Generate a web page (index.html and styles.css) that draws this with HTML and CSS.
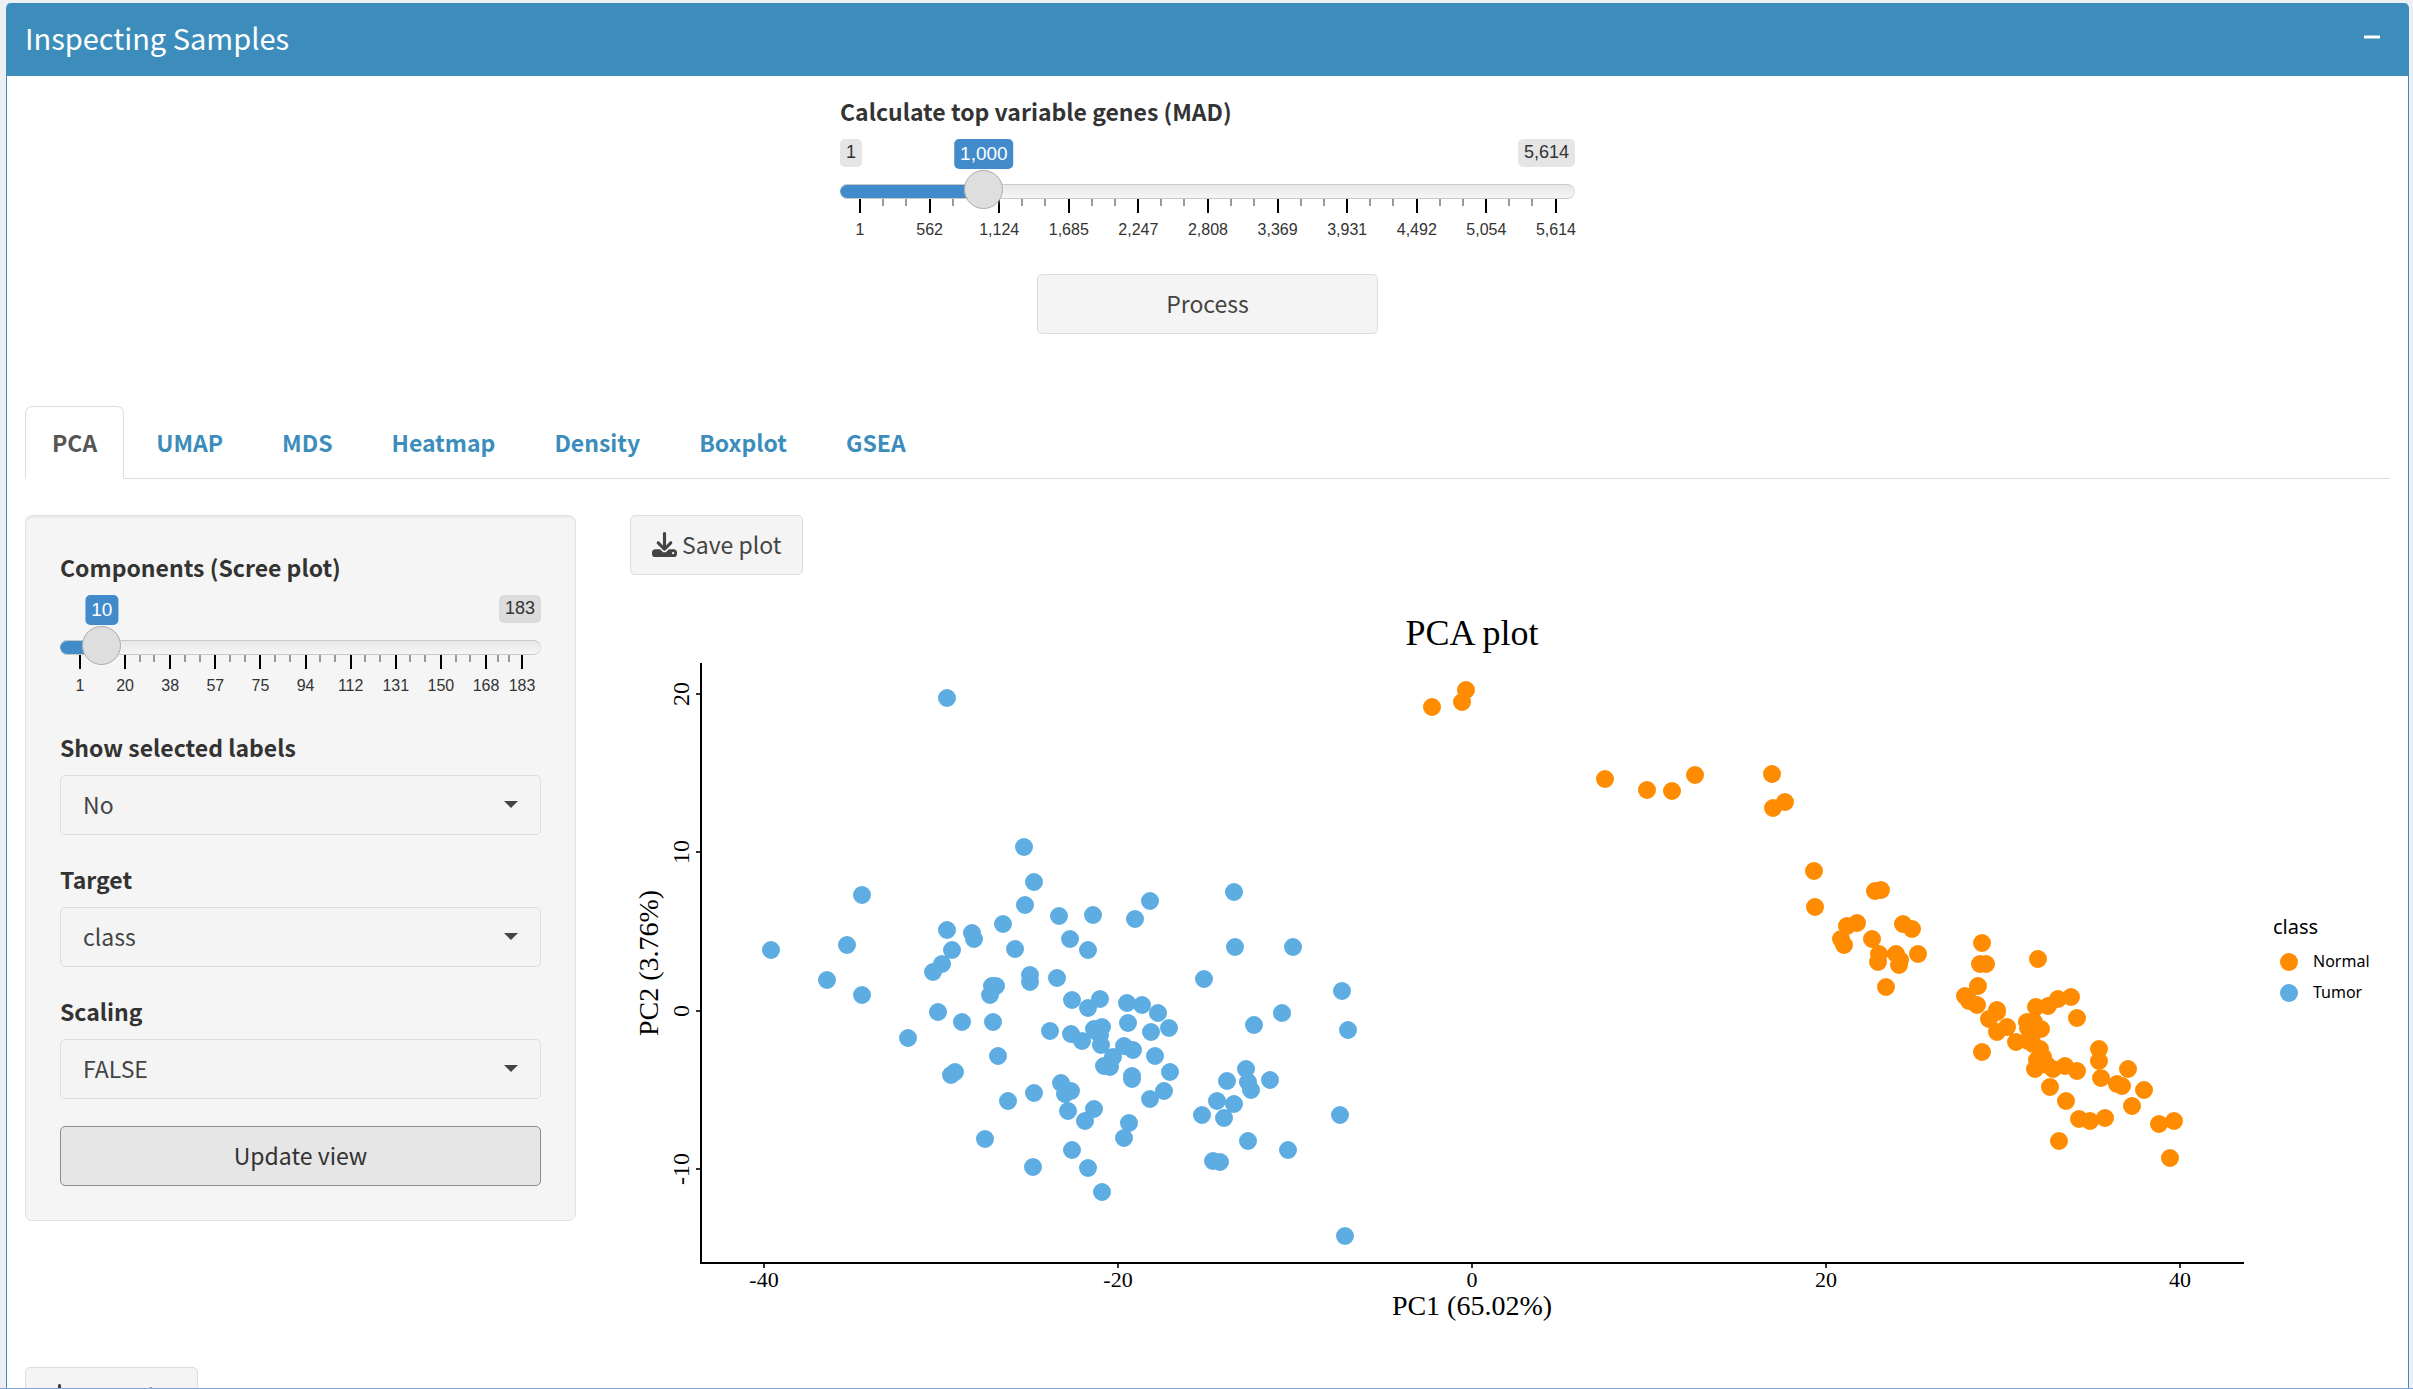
FILE: index.html
```html
<!DOCTYPE html>
<html lang="en">
<head>
<meta charset="utf-8">
<meta name="viewport" content="width=device-width, initial-scale=1">
<title>Inspecting Samples</title>
<link rel="stylesheet" href="styles.css">
</head>
<body>
<svg class="sprite" aria-hidden="true">
  <symbol id="icon-download" viewBox="0 0 512 512">
    <path d="M288 32c0-17.7-14.3-32-32-32s-32 14.3-32 32V274.7l-73.4-73.4c-12.5-12.5-32.8-12.5-45.3 0s-12.5 32.8 0 45.3l128 128c12.5 12.5 32.8 12.5 45.3 0l128-128c12.5-12.5 12.5-32.8 0-45.3s-32.8-12.5-45.3 0L288 274.7V32zM64 352c-35.3 0-64 28.7-64 64v32c0 35.3 28.7 64 64 64H448c35.3 0 64-28.7 64-64V416c0-35.3-28.7-64-64-64H346.5l-45.3 45.3c-25 25-65.5 25-90.5 0L165.5 352H64zm368 56a24 24 0 1 1 0 48 24 24 0 1 1 0-48z"/>
  </symbol>
</svg>
<main class="page">
  <section class="box">
    <header class="box-header">
      <h1 class="box-title">Inspecting Samples</h1>
      <button class="collapse" type="button" aria-label="Collapse"><svg viewBox="0 0 18 18"><path d="M1 9h16"/></svg></button>
    </header>
    <div class="box-body">
      <div class="top-controls">
        <div class="field">
          <label class="field-label" for="mad">Calculate top variable genes (MAD)</label>
          <div class="slider" style="--pos: .178">
            <div class="slider-head">
              <span class="limit">1</span>
              <output class="current" for="mad">1,000</output>
              <span class="limit limit-max">5,614</span>
            </div>
            <input id="mad" type="range" min="1" max="5614" value="1000">
            <ul class="ticks">
              <li><span>1</span></li><li><span>562</span></li><li><span>1,124</span></li><li><span>1,685</span></li><li><span>2,247</span></li><li><span>2,808</span></li><li><span>3,369</span></li><li><span>3,931</span></li><li><span>4,492</span></li><li><span>5,054</span></li><li><span>5,614</span></li>
            </ul>
          </div>
        </div>
        <button class="btn process" type="button">Process</button>
      </div>

      <nav class="tabs">
        <a class="tab active" href="#pca" aria-current="page">PCA</a>
        <a class="tab" href="#umap">UMAP</a>
        <a class="tab" href="#mds">MDS</a>
        <a class="tab" href="#heatmap">Heatmap</a>
        <a class="tab" href="#density">Density</a>
        <a class="tab" href="#boxplot">Boxplot</a>
        <a class="tab" href="#gsea">GSEA</a>
      </nav>

      <div class="panel" id="pca">
        <form class="well">
          <div class="field">
            <label class="field-label" for="components">Components (Scree plot)</label>
            <div class="slider" style="--pos: .0495">
              <div class="slider-head">
                <output class="current" for="components">10</output>
                <span class="limit limit-max">183</span>
              </div>
              <input id="components" type="range" min="1" max="183" value="10">
              <ul class="ticks ticks-short-end">
                <li><span>1</span></li><li><span>20</span></li><li><span>38</span></li><li><span>57</span></li><li><span>75</span></li><li><span>94</span></li><li><span>112</span></li><li><span>131</span></li><li><span>150</span></li><li><span>168</span></li><li><span>183</span></li>
              </ul>
            </div>
          </div>
          <div class="selects">
            <div class="field">
              <label class="field-label" for="labels">Show selected labels</label>
              <div class="select"><select id="labels"><option>No</option><option>Yes</option></select></div>
            </div>
            <div class="field">
              <label class="field-label" for="target">Target</label>
              <div class="select"><select id="target"><option>class</option></select></div>
            </div>
            <div class="field">
              <label class="field-label" for="scaling">Scaling</label>
              <div class="select"><select id="scaling"><option>FALSE</option><option>TRUE</option></select></div>
            </div>
            <button class="btn update" type="button">Update view</button>
          </div>
        </form>

        <div class="plot-column">
          <button class="btn save" type="button"><svg class="icon"><use href="#icon-download"/></svg>Save plot</button>
          <svg class="plot" viewBox="630 590 1760 740" role="img" aria-label="PCA plot of normal and tumor samples">
            <text class="plot-title" x="1472" y="645">PCA plot</text>
            <path class="axis" d="M701 663V1263H2244"/>
            <path class="axis-tick" d="M696 694h4M696 852h4M696 1011h4M696 1169h4M764 1264v4M1118 1264v4M1472 1264v4M1826 1264v4M2180 1264v4"/>
            <g class="x-labels">
              <text x="764" y="1287">-40</text><text x="1118" y="1287">-20</text><text x="1472" y="1287">0</text><text x="1826" y="1287">20</text><text x="2180" y="1287">40</text>
            </g>
            <g class="y-labels">
              <text transform="translate(689 694) rotate(-90)">20</text><text transform="translate(689 852) rotate(-90)">10</text><text transform="translate(689 1011) rotate(-90)">0</text><text transform="translate(689 1169) rotate(-90)">-10</text>
            </g>
            <text class="axis-title" x="1472" y="1315">PC1 (65.02%)</text>
            <text class="axis-title" transform="translate(658 963) rotate(-90)">PC2 (3.76%)</text>
            <path class="points tumor" d="M947 698h0M1024 847h0M1034 882h0M862 895h0M1025 905h0M1059 916h0M1093 915h0M1150 901h0M1135 919h0M1003 924h0M947 930h0M972 933h0M771 950h0M847 945h0M827 980h0M862 995h0M974 939h0M952 950h0M942 964h0M933 972h0M1015 949h0M1030 975h0M1030 982h0M1057 978h0M992 986h0M996 986h0M990 995h0M938 1012h0M962 1022h0M993 1022h0M908 1038h0M998 1056h0M951 1075h0M955 1072h0M1008 1101h0M1034 1093h0M985 1139h0M1033 1167h0M1070 939h0M1088 950h0M1072 1000h0M1088 1008h0M1100 999h0M1127 1003h0M1142 1005h0M1158 1013h0M1169 1028h0M1128 1023h0M1151 1032h0M1050 1031h0M1071 1034h0M1082 1041h0M1094 1029h0M1102 1027h0M1097 1032h0M1100 1035h0M1101 1045h0M1124 1046h0M1133 1050h0M1113 1057h0M1104 1066h0M1110 1067h0M1155 1056h0M1132 1076h0M1132 1079h0M1170 1072h0M1164 1091h0M1150 1099h0M1061 1083h0M1071 1091h0M1065 1094h0M1068 1111h0M1094 1109h0M1085 1121h0M1129 1123h0M1124 1138h0M1072 1150h0M1088 1168h0M1102 1192h0M1234 892h0M1235 947h0M1293 947h0M1204 979h0M1342 991h0M1282 1013h0M1254 1025h0M1348 1030h0M1246 1069h0M1227 1081h0M1248 1082h0M1251 1090h0M1270 1080h0M1217 1101h0M1234 1104h0M1202 1115h0M1224 1118h0M1340 1115h0M1248 1141h0M1288 1150h0M1213 1161h0M1220 1162h0M1345 1236h0"/>
            <path class="points normal" d="M1432 707h0M1466 690h0M1462 702h0M1605 779h0M1647 790h0M1672 791h0M1695 775h0M1772 774h0M1785 802h0M1773 808h0M1814 871h0M1815 907h0M1875 891h0M1881 890h0M1847 926h0M1857 923h0M1841 939h0M1844 945h0M1872 939h0M1903 924h0M1912 929h0M1879 954h0M1878 962h0M1896 954h0M1900 960h0M1899 965h0M1918 954h0M1886 987h0M1982 943h0M1980 964h0M1986 964h0M2038 959h0M1978 986h0M1965 996h0M1969 1001h0M1977 1005h0M1997 1010h0M1997 1012h0M1989 1019h0M2007 1027h0M1997 1032h0M1982 1052h0M2016 1042h0M2036 1007h0M2048 1006h0M2058 999h0M2071 997h0M2077 1018h0M2027 1022h0M2034 1022h0M2028 1028h0M2041 1029h0M2030 1037h0M2028 1041h0M2033 1044h0M2040 1049h0M2043 1057h0M2037 1060h0M2035 1069h0M2047 1065h0M2053 1069h0M2065 1066h0M2077 1071h0M2050 1087h0M2066 1101h0M2099 1049h0M2099 1061h0M2101 1078h0M2128 1069h0M2117 1084h0M2122 1086h0M2144 1090h0M2132 1106h0M2079 1119h0M2090 1121h0M2105 1118h0M2059 1141h0M2159 1124h0M2174 1121h0M2170 1158h0"/>
            <g class="legend">
              <text class="legend-title" x="2273" y="934">class</text>
              <path class="points normal" d="M2289 962h0"/>
              <text x="2313" y="967">Normal</text>
              <path class="points tumor" d="M2289 993h0"/>
              <text x="2313" y="998">Tumor</text>
            </g>
          </svg>
        </div>
      </div>

      <button class="btn save" type="button"><svg class="icon"><use href="#icon-download"/></svg>Save plot</button>
    </div>
  </section>
</main>
</body>
</html>
```
FILE: styles.css
```css
*, *::before, *::after { box-sizing: border-box; }

body {
  margin: 0;
  background: #ecf0f5;
  color: #333;
  font: 23px/35px "Noto Sans CJK SC", "Open Sans", sans-serif;
}

.sprite { display: none; }

.page {
  height: 100vh;
  overflow: hidden;
  padding: 3px 4px 0 6px;
  border-bottom: 1px solid #7ea6d8;
}

.box {
  background: #fff;
  border: solid #3c8dbc;
  border-width: 0 1px 1px;
  border-radius: 5px;
}

.box-header {
  display: flex;
  align-items: center;
  justify-content: space-between;
  height: 73px;
  padding: 0 27px 6px 18px;
  background: #3c8dbc;
  border-radius: 4px 4px 0 0;
  color: #fff;
}

.box-title {
  margin: 0;
  font-size: 29px;
  font-weight: 400;
  line-height: 40px;
}

.collapse {
  display: flex;
  padding: 0;
  border: 0;
  background: none;
}

.collapse svg {
  width: 18px;
  height: 18px;
  stroke: #fff;
  stroke-width: 3;
}

.box-body { padding: 18px; }

.top-controls {
  width: 735px;
  max-width: 100%;
  margin: 0 auto 72px;
}

.field-label {
  display: block;
  margin-bottom: 10px;
  font-weight: 700;
}

/* Range sliders */
.slider {
  position: relative;
  font-family: "Liberation Sans", Arial, sans-serif;
  padding-bottom: 34px;
}

.slider-head {
  display: flex;
  align-items: flex-start;
  height: 45px;
}

.limit {
  padding: 0 6px 1px;
  border-radius: 5px;
  background: rgba(0, 0, 0, .1);
  font-size: 18px;
  line-height: 27px;
}

.limit-max { margin-left: auto; }

.current {
  position: absolute;
  top: 0;
  left: calc(20px + (100% - 39px) * var(--pos));
  transform: translateX(-50%);
  padding: 0 6px;
  border-radius: 5px;
  background: #428bca;
  color: #fff;
  font-size: 19px;
  line-height: 30px;
}

.slider input {
  appearance: none;
  display: block;
  position: relative;
  width: 100%;
  height: 15px;
  margin: 0;
  background: none;
}

.slider input::-webkit-slider-runnable-track {
  height: 15px;
  border-radius: 8px;
  background:
    linear-gradient(#428bca, #428bca) 0 0 / calc(20px + (100% - 39px) * var(--pos)) 100% no-repeat border-box,
    linear-gradient(#ddd -50%, #fff 150%);
  box-shadow: inset 0 0 0 1px rgba(0, 0, 0, .02), inset 0 1px #ccc, inset 0 -1px #ccc;
}

.slider input::-webkit-slider-thumb {
  appearance: none;
  width: 39px;
  height: 39px;
  margin-top: -14px;
  border: 1px solid #ababab;
  border-radius: 50%;
  background: #dedede;
  box-shadow: 1px 1px 3px rgba(255, 255, 255, .3);
}

.ticks {
  display: flex;
  height: 41px;
  margin: 0 18px 0 19px;
  padding: 0;
  list-style: none;
  font-size: 16px;
  line-height: 20px;
}

.ticks li {
  flex: 45 1 0;
  min-width: 0;
  padding-top: 21px;
  background:
    linear-gradient(#000, #000) 0 0 / 2px 14px no-repeat,
    linear-gradient(#999, #999) 34% 0 / 2px 7px no-repeat,
    linear-gradient(#999, #999) 68% 0 / 2px 7px no-repeat;
}

.ticks li:last-child {
  flex: 0 0 2px;
  background: linear-gradient(#000, #000) 0 0 / 2px 14px no-repeat;
}

.ticks-short-end li:nth-last-child(2) { flex-grow: 36; }

.ticks span {
  display: flex;
  justify-content: center;
  width: 2px;
  white-space: nowrap;
}

/* Buttons */
.btn {
  height: 60px;
  padding: 0 21px 2px;
  border: 1px solid #ddd;
  border-radius: 5px;
  background: #f4f4f4;
  color: #444;
  font: inherit;
}

.process {
  display: block;
  width: 341px;
  margin: 0 auto;
}

.update {
  border-color: #8c8c8c;
  background: #e6e6e6;
  color: #333;
}

.save {
  display: inline-flex;
  align-items: center;
  gap: 5px;
}

.icon {
  width: 25px;
  height: 25px;
  fill: currentColor;
}

/* Tabs */
.tabs {
  display: flex;
  gap: 5px;
  margin-bottom: 36px;
  border-bottom: 1px solid #ddd;
}

.tab {
  padding: 18px 26px;
  border: 1px solid transparent;
  border-bottom: 0;
  border-radius: 7px 7px 0 0;
  color: #3c8dbc;
  font-weight: 700;
  text-decoration: none;
}

.tab.active {
  margin-bottom: -1px;
  border-color: #ddd;
  background: #fff;
  color: #555;
}

/* PCA panel */
.panel {
  display: grid;
  grid-template-columns: 551fr 1760fr;
  gap: 54px;
  align-items: start;
  margin-bottom: 37px;
}

.well {
  padding: 34px;
  border: 1px solid #e3e3e3;
  border-radius: 7px;
  background: #f5f5f5;
  box-shadow: inset 0 2px 2px rgba(0, 0, 0, .05);
}

.selects {
  display: flex;
  flex-direction: column;
  gap: 27px;
}

.select { position: relative; }

.select::after {
  content: "";
  position: absolute;
  top: 26px;
  right: 23px;
  border: solid transparent;
  border-width: 7px 7px 0;
  border-top-color: #444;
  pointer-events: none;
}

.select select {
  appearance: none;
  display: block;
  width: 100%;
  height: 60px;
  padding: 0 48px 2px 22px;
  border: 1px solid #ddd;
  border-radius: 5px;
  background: #f4f4f4;
  color: #444;
  font: inherit;
}

/* Plot */
.plot {
  display: block;
  width: 100%;
  margin-top: 15px;
  font-family: "Liberation Serif", "Times New Roman", serif;
}

.plot text { fill: #000; }

.plot-title,
.axis-title,
.x-labels,
.y-labels { text-anchor: middle; }

.plot-title { font-size: 36px; }
.axis-title { font-size: 28px; }
.x-labels { font-size: 22px; }
.y-labels { font-size: 24px; }

.axis {
  fill: none;
  stroke: #000;
  stroke-width: 2;
}

.axis-tick {
  stroke: #333;
  stroke-width: 2;
}

.points {
  fill: none;
  stroke-width: 18;
  stroke-linecap: round;
}

.tumor { stroke: #5dade2; }
.normal { stroke: #ff8c00; }

.legend {
  font-family: "Noto Sans", "Open Sans", sans-serif;
  font-size: 16px;
}

.legend-title { font-size: 20px; }
```
